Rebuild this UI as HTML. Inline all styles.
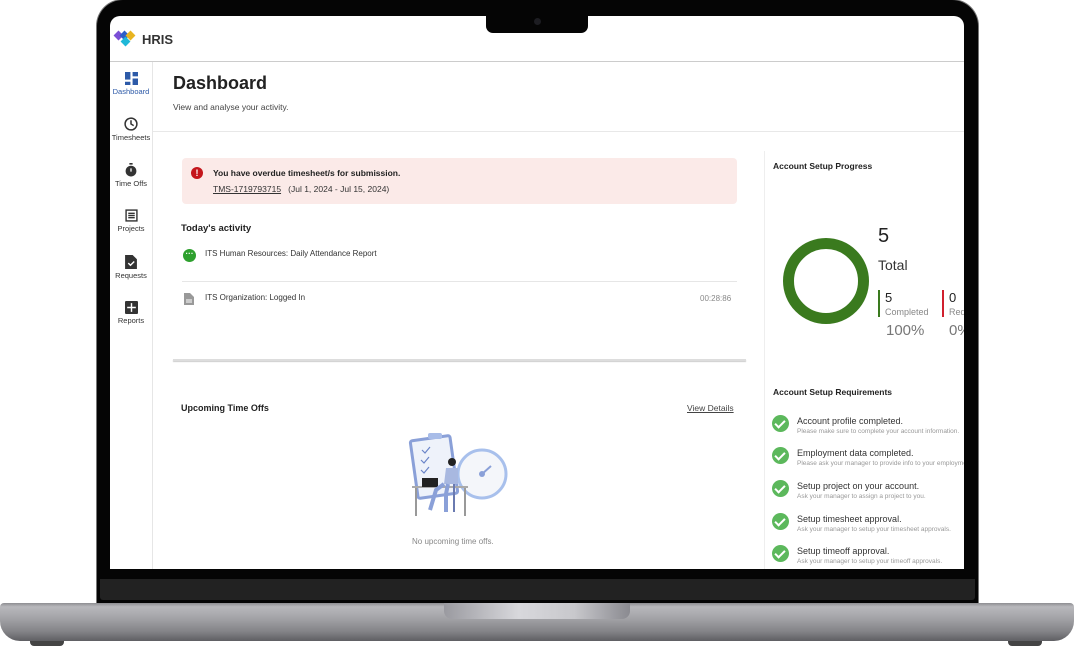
<!DOCTYPE html>
<html><head><meta charset="utf-8"><style>
*{box-sizing:border-box;margin:0;padding:0}
body{width:1074px;height:649px;background:#fff;position:relative;overflow:hidden;font-family:"Liberation Sans",sans-serif;color:#222}
.abs{position:absolute}
.lid{left:97px;top:0;width:881px;height:604px;background:#050505;border-radius:26px 26px 0 0;box-shadow:0 0 0 1px #777}
.screen{left:110px;top:16px;width:854px;height:553px;background:#fff;overflow:hidden;border-radius:10px 10px 0 0}
.notch{left:486px;top:14px;width:102px;height:19px;background:#050505;border-radius:0 0 7px 7px}
.cam{left:534px;top:18px;width:7px;height:7px;border-radius:50%;background:#1d1d22}
.chin{left:100px;top:579px;width:875px;height:21px;background:#222;border-radius:0 0 3px 3px}
.base{left:0;top:603px;width:1074px;height:38px;border-radius:4px 4px 20px 20px;background:linear-gradient(#8e8e92 0,#b8b8bc 10%,#a3a3a7 40%,#838387 75%,#5f5f63 100%)}
.hinge{left:444px;top:603px;width:186px;height:16px;border-radius:0 0 8px 8px;background:linear-gradient(90deg,#9a9aa0,#d8d8dc 40%,#c8c8cc 70%,#8a8a90)}
.foot{top:641px;width:34px;height:5px;background:#444;border-radius:0 0 4px 4px}
.nav{position:absolute;left:0;width:42px;text-align:center;font-size:7.5px;color:#333}
.nav svg{display:block;margin:0 auto 2px}
.sm{font-size:8.5px}
.req{position:absolute;left:662px;font-size:9px;color:#333}
.req .d{font-size:6.5px;color:#999;margin-top:2px;white-space:nowrap}
.chk{position:absolute;left:-25px;top:-1px;width:17px;height:17px;border-radius:50%;background:#5cb85c}
.chk:after{content:"";position:absolute;left:5px;top:3px;width:4px;height:8px;border:solid #fff;border-width:0 2px 2px 0;transform:rotate(45deg)}
</style></head><body>
<div class="abs lid"></div>
<div class="abs chin"></div>
<div class="abs screen">
  <svg class="abs" style="left:3px;top:12px" width="28" height="20" viewBox="0 0 28 20">
    <rect x="2" y="4" width="7" height="7" transform="rotate(45 5.5 7.5)" fill="#7b4fd6"/>
    <rect x="8" y="4" width="7" height="7" transform="rotate(45 11.5 7.5)" fill="#2d5fc8"/>
    <rect x="14" y="4" width="7" height="7" transform="rotate(45 17.5 7.5)" fill="#e8b420"/>
    <rect x="9" y="10" width="7" height="7" transform="rotate(45 12.5 13.5)" fill="#1fb8d8"/>
  </svg>
  <div class="abs" style="left:32px;top:16px;font-weight:bold;font-size:13px;color:#333">HRIS</div>
  <div class="abs" style="left:0;top:45px;width:854px;height:1px;background:#ccc"></div>
  <div class="abs" style="left:42px;top:46px;width:1px;height:510px;background:#e6e6e6"></div>
  <div class="nav" style="top:56px;color:#2d5aa8"><svg width="13" height="13" viewBox="0 0 12 12" fill="#2d5aa8"><rect x="0" y="0" width="5" height="7"/><rect x="7" y="0" width="5" height="4"/><rect x="0" y="9" width="5" height="3"/><rect x="7" y="6" width="5" height="6"/></svg>Dashboard</div>
  <div class="nav" style="top:101px"><svg width="14" height="14" viewBox="0 0 13 13" fill="none" stroke="#333" stroke-width="1.4"><circle cx="6.5" cy="6.5" r="5.5"/><path d="M6.5 3v3.5l2.5 1.5"/></svg>Timesheets</div>
  <div class="nav" style="top:147px"><svg width="14" height="14" viewBox="0 0 13 13"><rect x="5" y="0" width="3" height="1.5" fill="#333"/><circle cx="6.5" cy="7.5" r="5" fill="#333"/><path d="M6.5 5v3" stroke="#fff" stroke-width="1.2"/></svg>Time Offs</div>
  <div class="nav" style="top:193px"><svg width="13" height="13" viewBox="0 0 12 12" fill="none" stroke="#333" stroke-width="1.3"><rect x="1" y="1" width="10" height="10"/><path d="M3 4h6M3 6h6M3 8h6"/></svg>Projects</div>
  <div class="nav" style="top:239px"><svg width="12" height="14" viewBox="0 0 11 13"><path d="M0 0h7l4 4v9H0z" fill="#333"/><path d="M3 7.5l2 2 3.5-3.5" stroke="#fff" stroke-width="1.3" fill="none"/></svg>Requests</div>
  <div class="nav" style="top:285px"><svg width="13" height="13" viewBox="0 0 12 12"><rect width="12" height="12" rx="1" fill="#333"/><path d="M6 2v8M2 6h8" stroke="#fff" stroke-width="1.3"/></svg>Reports</div>
  <div class="abs" style="left:63px;top:57px;font-size:18px;font-weight:bold;color:#222">Dashboard</div>
  <div class="abs" style="left:63px;top:86px;font-size:8.5px;color:#444">View and analyse your activity.</div>
  <div class="abs" style="left:43px;top:115px;width:811px;height:1px;background:#e8e8e8"></div>
  <div class="abs" style="left:72px;top:142px;width:555px;height:46px;background:#fbeae8;border-radius:4px"></div>
  <div class="abs" style="left:81px;top:151px;width:12px;height:12px;border-radius:50%;background:#c4161c;color:#fff;font-size:9px;font-weight:bold;text-align:center;line-height:12px">!</div>
  <div class="abs" style="left:103px;top:152px;font-size:8.5px;font-weight:bold;color:#222">You have overdue timesheet/s for submission.</div>
  <div class="abs sm" style="left:103px;top:168px;color:#333"><u>TMS-1719793715</u>&nbsp;&nbsp;&nbsp;(Jul 1, 2024 - Jul 15, 2024)</div>
  <div class="abs" style="left:71px;top:207px;font-size:9.5px;font-weight:bold;color:#222">Today's activity</div>
  <div class="abs" style="left:73px;top:233px;width:13px;height:13px;border-radius:50%;background:#2ea02e;color:#fff;font-size:8px;text-align:center;line-height:9px;font-weight:bold">···</div>
  <div class="abs" style="left:95px;top:233px;font-size:8px;color:#333">ITS Human Resources: Daily Attendance Report</div>
  <div class="abs" style="left:72px;top:265px;width:555px;height:1px;background:#e6e6e6"></div>
  <svg class="abs" style="left:74px;top:277px" width="10" height="12" viewBox="0 0 10 12"><path d="M0 0h6l4 4v8H0z" fill="#999"/><path d="M2 7h6M2 9h6" stroke="#fff" stroke-width="1"/></svg>
  <div class="abs" style="left:95px;top:277px;font-size:8px;color:#333">ITS Organization: Logged In</div>
  <div class="abs" style="left:590px;top:278px;font-size:8px;color:#888">00:28:86</div>
  <div class="abs" style="left:63px;top:343px;width:573px;height:2px;background:#ddd;box-shadow:0 1px 1px #ccc"></div>
  <div class="abs" style="left:71px;top:387px;font-size:9px;font-weight:bold;color:#222">Upcoming Time Offs</div>
  <div class="abs" style="left:577px;top:387px;font-size:8.5px;color:#444;text-decoration:underline">View Details</div>
  <svg class="abs" style="left:298px;top:416px" width="102" height="86" viewBox="0 0 102 86">
    <rect x="6" y="6" width="40" height="58" rx="2" transform="rotate(-8 26 35)" fill="#eef2fa" stroke="#8aa0d8" stroke-width="3"/>
    <rect x="20" y="1" width="14" height="6" rx="2" fill="#a8bce8"/>
    <path d="M14 18l3 3 5-6M13 28l3 3 5-6M13 38l3 3 5-6" stroke="#6a84c8" stroke-width="1.2" fill="none"/>
    <circle cx="74" cy="42" r="24" fill="#f4f6fa" stroke="#a8c0ec" stroke-width="3"/>
    <path d="M74 42l9-8" stroke="#8aa0d8" stroke-width="2"/><circle cx="74" cy="42" r="3" fill="#8aa0d8"/>
    <rect x="4" y="54" width="56" height="2" fill="#aaa"/>
    <rect x="7" y="56" width="2" height="28" fill="#999"/><rect x="56" y="56" width="2" height="28" fill="#999"/>
    <rect x="14" y="46" width="16" height="9" fill="#222"/>
    <circle cx="44" cy="30" r="4" fill="#222"/>
    <path d="M38 36h12v16H36z" fill="#a8b8e0"/>
    <path d="M36 52l-8 6-6 20M40 52l-2 10 0 18" stroke="#8aa0d8" stroke-width="4" fill="none"/>
    <path d="M46 52v28" stroke="#6a7ab0" stroke-width="2"/>
  </svg>
  <div class="abs" style="left:302px;top:521px;font-size:8px;color:#888">No upcoming time offs.</div>
  <div class="abs" style="left:654px;top:135px;width:1px;height:420px;background:#eee"></div>
  <div class="abs" style="left:663px;top:145px;font-size:8.5px;font-weight:bold;color:#222">Account Setup Progress</div>
  <div class="abs" style="left:673px;top:222px;width:86px;height:86px;border-radius:50%;border:11px solid #3a7a1e"></div>
  <div class="abs" style="left:768px;top:209px;font-size:20px;color:#222">5</div>
  <div class="abs" style="left:768px;top:241px;font-size:14px;color:#333">Total</div>
  <div class="abs" style="left:768px;top:274px;width:2px;height:27px;background:#3a7a1e"></div>
  <div class="abs" style="left:775px;top:274px;font-size:13px;color:#222">5</div>
  <div class="abs" style="left:775px;top:291px;font-size:9px;color:#888">Completed</div>
  <div class="abs" style="left:776px;top:306px;font-size:15px;color:#777">100%</div>
  <div class="abs" style="left:832px;top:274px;width:2px;height:27px;background:#d0202e"></div>
  <div class="abs" style="left:839px;top:274px;font-size:13px;color:#222">0</div>
  <div class="abs" style="left:839px;top:291px;font-size:9px;color:#888">Req</div>
  <div class="abs" style="left:839px;top:306px;font-size:15px;color:#777">0%</div>
  <div class="abs" style="left:663px;top:371px;font-size:8.5px;font-weight:bold;color:#222">Account Setup Requirements</div>
  <div class="req" style="top:400px;left:687px"><span class="chk"></span>Account profile completed.<div class="d">Please make sure to complete your account information.</div></div>
  <div class="req" style="top:432px;left:687px"><span class="chk"></span>Employment data completed.<div class="d">Please ask your manager to provide info to your employment.</div></div>
  <div class="req" style="top:465px;left:687px"><span class="chk"></span>Setup project on your account.<div class="d">Ask your manager to assign a project to you.</div></div>
  <div class="req" style="top:498px;left:687px"><span class="chk"></span>Setup timesheet approval.<div class="d">Ask your manager to setup your timesheet approvals.</div></div>
  <div class="req" style="top:530px;left:687px"><span class="chk"></span>Setup timeoff approval.<div class="d">Ask your manager to setup your timeoff approvals.</div></div>
</div>
<div class="abs notch"></div>
<div class="abs cam"></div>
<div class="abs base"></div>
<div class="abs hinge"></div>
<div class="abs foot" style="left:30px"></div>
<div class="abs foot" style="left:1008px"></div>
</body></html>
